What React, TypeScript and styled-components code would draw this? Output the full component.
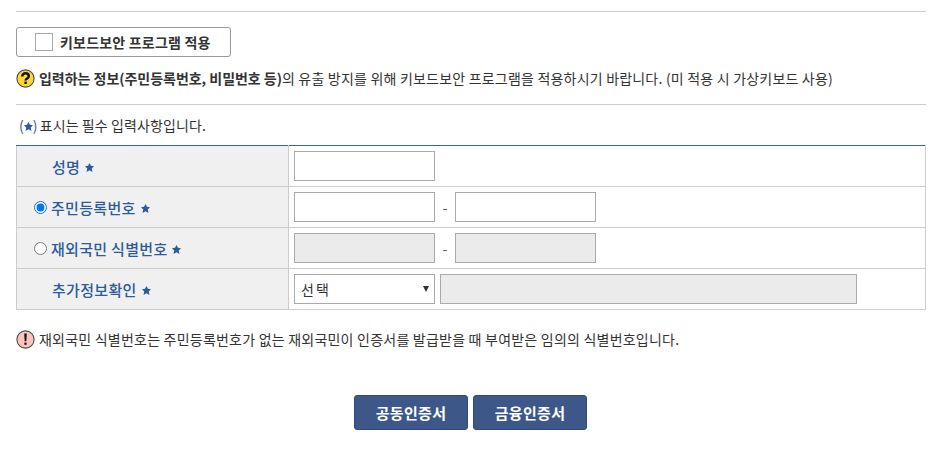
import React from 'react';
import styled, { createGlobalStyle } from 'styled-components';

const GlobalStyle = createGlobalStyle`
  html, body {
    margin: 0;
    padding: 0;
    background: #fff;
  }
  body {
    font-family: "Noto Sans CJK KR", "Noto Sans", sans-serif;
    font-size: 14px;
    letter-spacing: 0.13px;
    color: #333;
  }
`;

function Star() {
  return (
    <StarIcon viewBox="0 0 10 10">
      <path d="M5 0 6.6 3.1 10 3.6 7.5 6 8.3 10 5 8 1.7 10 2.5 6 0 3.6 3.4 3.1Z" />
    </StarIcon>
  );
}

function InfoIcon({ kind }: { kind: 'question' | 'alert' }) {
  return (
    <NoticeIcon viewBox="0 0 19 19">
      <circle cx="9.5" cy="9.5" r="8.6" fill={kind === 'question' ? '#fdd835' : '#fbc4bc'} stroke="#4a4a4a" strokeWidth="1.1" />
      {kind === 'question' ? (
        <>
          <path d="M6.2 7.4C6.2 5.4 7.6 4.3 9.5 4.3S12.8 5.4 12.8 7.2C12.8 9.4 9.6 9.4 9.6 11.4" fill="none" stroke="#111" strokeWidth="2.4" />
          <rect x="8.4" y="12.6" width="2.4" height="2.4" fill="#111" />
        </>
      ) : (
        <>
          <path d="M8.2 3.6H10.8L10.3 11.2H8.7Z" fill="#111" />
          <rect x="8.4" y="12.6" width="2.2" height="2.2" fill="#111" />
        </>
      )}
    </NoticeIcon>
  );
}

export default function App() {
  return (
    <Page>
      <GlobalStyle />
      <Divider />
      <KeyboardToggle type="button">
        <ToggleBox />
        키보드보안 프로그램 적용
      </KeyboardToggle>
      <NoticeLine>
        <InfoIcon kind="question" />
        <span>
          <strong>입력하는 정보(주민등록번호, 비밀번호 등)</strong>의 유출 방지를 위해 키보드보안 프로그램을 적용하시기 바랍니다. (미 적용 시 가상키보드 사용)
        </span>
      </NoticeLine>
      <LowerDivider />
      <RequiredNote>
        <StarParen>
          (<Star />)
        </StarParen>
        표시는 필수 입력사항입니다.
      </RequiredNote>
      <FormTable>
        <tbody>
          <tr>
            <LabelCell>
              <LabelText $indent>
                성명
                <Star />
              </LabelText>
            </LabelCell>
            <ValueCell>
              <FieldRow>
                <TextInput />
              </FieldRow>
            </ValueCell>
          </tr>
          <tr>
            <LabelCell>
              <LabelText>
                <Radio name="idType" defaultChecked />
                주민등록번호
                <Star />
              </LabelText>
            </LabelCell>
            <ValueCell>
              <FieldRow>
                <TextInput />
                <Dash>-</Dash>
                <TextInput />
              </FieldRow>
            </ValueCell>
          </tr>
          <tr>
            <LabelCell>
              <LabelText>
                <Radio name="idType" />
                재외국민 식별번호
                <Star />
              </LabelText>
            </LabelCell>
            <ValueCell>
              <FieldRow>
                <TextInput disabled />
                <Dash>-</Dash>
                <TextInput disabled />
              </FieldRow>
            </ValueCell>
          </tr>
          <tr>
            <LabelCell>
              <LabelText $indent>
                추가정보확인
                <Star />
              </LabelText>
            </LabelCell>
            <ValueCell>
              <FieldRow $gap={5}>
                <SelectBox>
                  선택
                  <Caret />
                </SelectBox>
                <WideInput disabled />
              </FieldRow>
            </ValueCell>
          </tr>
        </tbody>
      </FormTable>
      <AlertLine>
        <InfoIcon kind="alert" />
        재외국민 식별번호는 주민등록번호가 없는 재외국민이 인증서를 발급받을 때 부여받은 임의의 식별번호입니다.
      </AlertLine>
      <ButtonRow>
        <CertButton type="button">공동인증서</CertButton>
        <CertButton type="button">금융인증서</CertButton>
      </ButtonRow>
    </Page>
  );
}

const Page = styled.div`
  width: 910px;
  padding: 11px 21px 0 16px;
`;

const Divider = styled.div`
  height: 1px;
  background: #ccc;
`;

const LowerDivider = styled(Divider)`
  margin-top: 16px;
`;

const KeyboardToggle = styled.button`
  display: flex;
  align-items: center;
  gap: 7px;
  width: 215px;
  height: 30px;
  margin-top: 15px;
  padding: 0 0 0 18px;
  box-sizing: border-box;
  background: #fff;
  border: 1px solid #999;
  border-radius: 3px;
  font: 700 14px "Noto Sans CJK KR", sans-serif;
  letter-spacing: 0.2px;
  color: #333;
`;

const ToggleBox = styled.span`
  width: 16px;
  height: 16px;
  border: 1px solid #aaa;
`;

const NoticeLine = styled.div`
  display: flex;
  align-items: center;
  gap: 4px;
  height: 20px;
  margin-top: 11px;
  white-space: nowrap;
  line-height: 18px;
  letter-spacing: 0.2px;
  strong {
    font-weight: 700;
    letter-spacing: -0.03px;
  }
`;

const NoticeIcon = styled.svg`
  flex: none;
  width: 19px;
  height: 19px;
`;

const RequiredNote = styled.div`
  display: flex;
  align-items: center;
  gap: 3px;
  height: 20px;
  margin: 10px 0 10px 3px;
  line-height: 18px;
  letter-spacing: 0.1px;
`;

const StarParen = styled.span`
  display: inline-flex;
  align-items: center;
  margin-right: -1px;
  color: #2c5a9e;
`;

const StarIcon = styled.svg`
  flex: none;
  width: 9px;
  height: 9px;
  margin-top: 2px;
  fill: #2c5a9e;
`;

const FormTable = styled.table`
  width: 910px;
  table-layout: fixed;
  border-collapse: collapse;
  tr {
    height: 41px;
  }
  tr:first-child td {
    border-top: 1px solid #3b659f;
  }
`;

const LabelCell = styled.td`
  width: 271px;
  padding: 0;
  background: #f0f0f0;
  border: 1px solid #ccc;
`;

const ValueCell = styled.td`
  padding: 0 0 0 5px;
  border: 1px solid #ccc;
`;

const LabelText = styled.div<{ $indent?: boolean }>`
  display: flex;
  align-items: center;
  gap: 5px;
  padding-left: ${(p) => (p.$indent ? '35px' : '17px')};
  font-weight: 500;
  font-size: 15px;
  letter-spacing: 0.3px;
  color: #2c5a9e;
  white-space: pre;
`;

const Radio = styled.input.attrs({ type: 'radio' })`
  flex: none;
  width: 13px;
  height: 13px;
  margin: 0 -1px 0 0;
`;

const FieldRow = styled.div<{ $gap?: number }>`
  display: flex;
  align-items: center;
  gap: ${(p) => p.$gap ?? 0}px;
`;

const TextInput = styled.input`
  width: 141px;
  height: 30px;
  padding: 0;
  box-sizing: border-box;
  border: 1px solid #aaa;
  border-radius: 0;
  background: ${(p) => (p.disabled ? '#ebebeb' : '#fff')};
`;

const WideInput = styled(TextInput)`
  width: 417px;
`;

const Dash = styled.span`
  width: 20px;
  text-align: center;
  color: #555;
`;

const SelectBox = styled.div`
  display: flex;
  align-items: center;
  justify-content: space-between;
  width: 141px;
  height: 30px;
  padding: 0 5px 0 6px;
  box-sizing: border-box;
  border: 1px solid #aaa;
  font-size: 14px;
  letter-spacing: 2px;
`;

const Caret = styled.span`
  width: 0;
  height: 0;
  border-left: 3px solid transparent;
  border-right: 3px solid transparent;
  border-top: 6px solid #333;
`;

const AlertLine = styled(NoticeLine)`
  gap: 4px;
  margin-top: 19px;
  letter-spacing: 0.22px;
`;

const ButtonRow = styled.div`
  display: flex;
  justify-content: center;
  gap: 5px;
  margin-top: 46px;
  padding-right: 1px;
`;

const CertButton = styled.button`
  width: 114px;
  height: 35px;
  padding: 0;
  background: #3d5789;
  border: 1px solid #2f4a80;
  border-radius: 3px;
  color: #fff;
  font: 700 15px "Noto Sans CJK KR", sans-serif;
  letter-spacing: 0.3px;
`;
